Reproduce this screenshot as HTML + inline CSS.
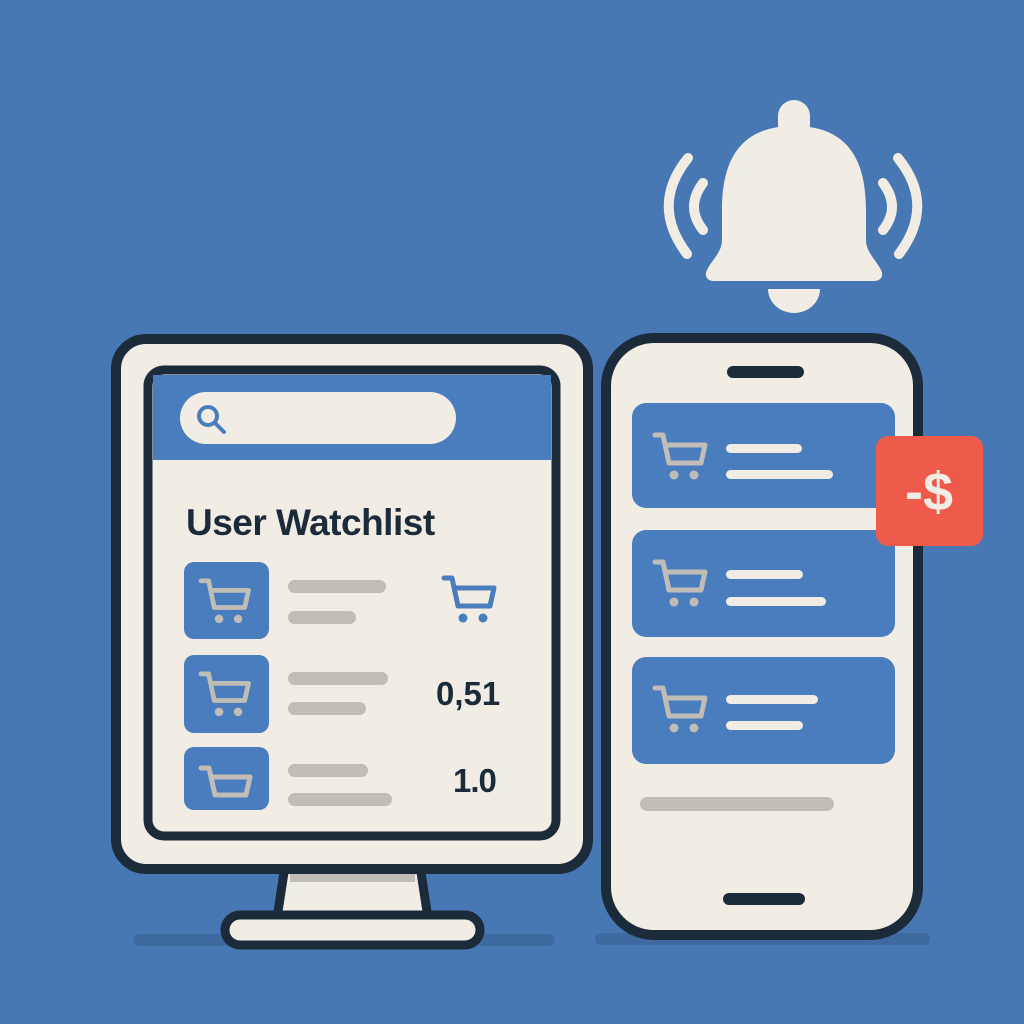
<!DOCTYPE html>
<html><head><meta charset="utf-8"><style>html,body{margin:0;padding:0;background:#4878b4}svg{display:block}</style></head>
<body>
<svg width="1024" height="1024" viewBox="0 0 1024 1024" xmlns="http://www.w3.org/2000/svg">
<defs>
<g id="cart">
<path d="M0 2 H8 L14 30 H46 L50 12 H12" fill="none" stroke="currentColor" stroke-width="5" stroke-linecap="round" stroke-linejoin="round"/>
<circle cx="19" cy="42" r="4.5" fill="currentColor"/>
<circle cx="39" cy="42" r="4.5" fill="currentColor"/>
</g>
</defs>
<rect width="1024" height="1024" fill="#4878b4"/>
<rect x="133" y="934" width="422" height="12" rx="6" fill="#3f6aa0"/>
<rect x="595" y="933" width="335" height="12" rx="6" fill="#3f6aa0"/>

<g fill="#f1ede4">
<rect x="778" y="100" width="32" height="40" rx="16"/>
<path d="M794 126 C740 126 722 160 722 210 L722 240 C722 252 712 260 707 270 C704 276 707 281 714 281 L874 281 C881 281 884 276 881 270 C876 260 866 252 866 240 L866 210 C866 160 848 126 794 126 Z"/>
<path d="M768 289 H820 A26 24 0 0 1 768 289 Z"/>
</g>
<g fill="none" stroke="#f1ede4" stroke-width="10" stroke-linecap="round">
<path d="M688 158 Q650 205 687 254"/>
<path d="M703 183 Q685 207 703 230"/>
<path d="M898 158 Q936 205 899 254"/>
<path d="M883 183 Q901 207 883 230"/>
</g>

<path d="M285 866 H420 L428 918 H277 Z" fill="#f1ede4" stroke="#1c2b3a" stroke-width="9"/>
<rect x="290" y="870" width="125" height="12" fill="#c0bdb7"/>
<rect x="225" y="915" width="255" height="30" rx="15" fill="#f1ede4" stroke="#1c2b3a" stroke-width="9"/>
<rect x="116" y="339" width="472" height="530" rx="30" fill="#f1ede4" stroke="#1c2b3a" stroke-width="10"/>
<rect x="148" y="370" width="408" height="466" rx="16" fill="#f1ede4" stroke="#1c2b3a" stroke-width="9"/>
<path d="M153 375 H551 V460 H153 Z" fill="#4a7dbd"/>
<rect x="180" y="392" width="276" height="52" rx="26" fill="#f1ede4"/>
<circle cx="208" cy="416" r="9" fill="none" stroke="#4a7dbd" stroke-width="4"/>
<line x1="215" y1="423" x2="224" y2="432" stroke="#4a7dbd" stroke-width="4" stroke-linecap="round"/>
<text x="186" y="535" font-family="Liberation Sans, sans-serif" font-size="37" font-weight="bold" fill="#1c2b3a" style="letter-spacing:-0.5px">User Watchlist</text>

<g fill="#4a7dbd">
<rect x="184" y="562" width="85" height="77" rx="10"/>
<rect x="184" y="655" width="85" height="78" rx="10"/>
<rect x="184" y="747" width="85" height="63" rx="10"/>
</g>
<use href="#cart" color="#c0bdb7" transform="translate(201,579) scale(0.95)"/>
<use href="#cart" color="#c0bdb7" transform="translate(201,672) scale(0.95)"/>
<path d="M201 768 H209 L215 795 H246 L250 777 H212" fill="none" stroke="#c0bdb7" stroke-width="5" stroke-linejoin="round" stroke-linecap="round"/>
<use href="#cart" color="#4a7dbd" transform="translate(444,576)"/>
<g fill="#c0bdb7">
<rect x="288" y="580" width="98" height="13" rx="6.5"/>
<rect x="288" y="611" width="68" height="13" rx="6.5"/>
<rect x="288" y="672" width="100" height="13" rx="6.5"/>
<rect x="288" y="702" width="78" height="13" rx="6.5"/>
<rect x="288" y="764" width="80" height="13" rx="6.5"/>
<rect x="288" y="793" width="104" height="13" rx="6.5"/>
</g>
<text x="436" y="705" font-family="Liberation Sans, sans-serif" font-size="33" font-weight="bold" fill="#1c2b3a">0,51</text>
<text x="453" y="792" font-family="Liberation Sans, sans-serif" font-size="33" font-weight="bold" fill="#1c2b3a" style="letter-spacing:-1px">1.0</text>

<rect x="606" y="338" width="312" height="597" rx="48" fill="#f1ede4" stroke="#1c2b3a" stroke-width="10"/>
<rect x="727" y="366" width="77" height="12" rx="6" fill="#1c2b3a"/>
<rect x="723" y="893" width="82" height="12" rx="6" fill="#1c2b3a"/>
<g fill="#4a7dbd">
<rect x="632" y="403" width="263" height="105" rx="14"/>
<rect x="632" y="530" width="263" height="107" rx="14"/>
<rect x="632" y="657" width="263" height="107" rx="14"/>
</g>
<use href="#cart" color="#c0bdb7" transform="translate(655,433)"/>
<use href="#cart" color="#c0bdb7" transform="translate(655,560)"/>
<use href="#cart" color="#c0bdb7" transform="translate(655,686)"/>
<g fill="#f1ede4">
<rect x="726" y="444" width="76" height="9" rx="4.5"/>
<rect x="726" y="470" width="107" height="9" rx="4.5"/>
<rect x="726" y="570" width="77" height="9" rx="4.5"/>
<rect x="726" y="597" width="100" height="9" rx="4.5"/>
<rect x="726" y="695" width="92" height="9" rx="4.5"/>
<rect x="726" y="721" width="77" height="9" rx="4.5"/>
</g>
<rect x="640" y="797" width="194" height="14" rx="7" fill="#c0bdb7"/>

<rect x="876" y="436" width="107" height="110" rx="12" fill="#ee5b4b"/>
<text x="929" y="510" text-anchor="middle" font-family="Liberation Sans, sans-serif" font-size="54" font-weight="bold" fill="#f1ede4">-$</text>
</svg>
</body></html>
